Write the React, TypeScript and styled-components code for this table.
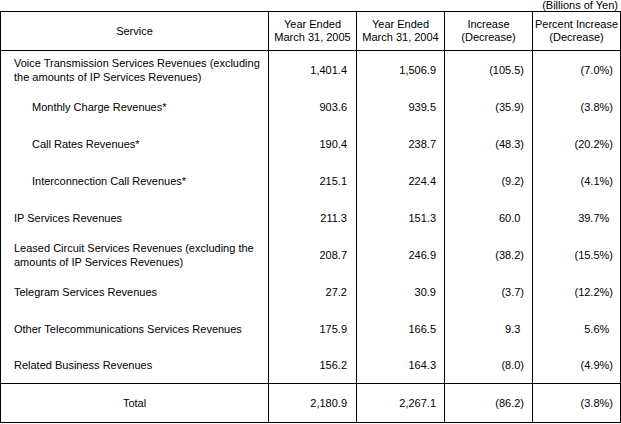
import React from "react";
import styled, { createGlobalStyle } from "styled-components";

const GlobalStyle = createGlobalStyle`
  html, body { margin: 0; padding: 0; background: #ffffff; }
  body { font-family: "Liberation Sans", Arial, sans-serif; font-size: 11px; color: #000; }
`;

const Page = styled.div`
  width: 621px;
  display: flex;
  flex-direction: column;
`;

const Unit = styled.div`
  height: 11px;
  line-height: 11px;
  text-align: right;
  padding-right: 3px;
  white-space: nowrap;
`;

const Table = styled.table`
  border-collapse: separate;
  border-spacing: 0;
  width: 621px;
  table-layout: fixed;
  border-top: 1px solid #000;
  border-left: 1px solid #000;
`;

const HeadCell = styled.th<{ $w: number }>`
  width: ${(p) => p.$w}px;
  height: 39px;
  box-sizing: border-box;
  padding: 0;
  font-weight: normal;
  text-align: center;
  vertical-align: middle;
  line-height: 13px;
  border-right: 1px solid #000;
  border-bottom: 1px solid #000;
  white-space: nowrap;
`;

const LabelCell = styled.td<{ $indent?: boolean; $h: number }>`
  height: ${(p) => p.$h}px;
  box-sizing: border-box;
  padding: 0 4px 0 ${(p) => (p.$indent ? 31 : 13)}px;
  vertical-align: middle;
  line-height: 14px;
  border-right: 1px solid #000;
`;

const NumCell = styled.td<{ $pr: number }>`
  box-sizing: border-box;
  padding: 0 ${(p) => p.$pr}px 0 0;
  text-align: right;
  vertical-align: middle;
  white-space: nowrap;
  border-right: 1px solid #000;
`;

const TotalLabel = styled.td`
  height: 40px;
  box-sizing: border-box;
  padding: 0;
  text-align: center;
  vertical-align: middle;
  border-right: 1px solid #000;
  border-top: 1px solid #000;
  border-bottom: 1px solid #000;
`;

const TotalNum = styled(NumCell)`
  border-top: 1px solid #000;
  border-bottom: 1px solid #000;
`;

const Ghost = styled.span`
  visibility: hidden;
`;

type Row = {
  label: string;
  indent?: boolean;
  v: [string, string, string, string];
};

const rows: Row[] = [
  {
    label: "Voice Transmission Services Revenues (excluding the amounts of IP Services Revenues)",
    v: ["1,401.4", "1,506.9", "(105.5)", "(7.0%)"],
  },
  { label: "Monthly Charge Revenues*", indent: true, v: ["903.6", "939.5", "(35.9)", "(3.8%)"] },
  { label: "Call Rates Revenues*", indent: true, v: ["190.4", "238.7", "(48.3)", "(20.2%)"] },
  { label: "Interconnection Call Revenues*", indent: true, v: ["215.1", "224.4", "(9.2)", "(4.1%)"] },
  { label: "IP Services Revenues", v: ["211.3", "151.3", "60.0", "39.7%"] },
  {
    label: "Leased Circuit Services Revenues (excluding the amounts of IP Services Revenues)",
    v: ["208.7", "246.9", "(38.2)", "(15.5%)"],
  },
  { label: "Telegram Services Revenues", v: ["27.2", "30.9", "(3.7)", "(12.2%)"] },
  { label: "Other Telecommunications Services Revenues", v: ["175.9", "166.5", "9.3", "5.6%"] },
  { label: "Related Business Revenues", v: ["156.2", "164.3", "(8.0)", "(4.9%)"] },
];

const pads = [9, 8, 8, 7];

const Value: React.FC<{ text: string; paren: boolean }> = ({ text, paren }) =>
  paren && !text.startsWith("(") ? (
    <>
      {text}
      <Ghost>)</Ghost>
    </>
  ) : (
    <>{text}</>
  );

export default function App() {
  return (
    <Page>
      <GlobalStyle />
      <Unit>(Billions of Yen)</Unit>
      <Table>
        <thead>
          <tr>
            <HeadCell $w={268}>Service</HeadCell>
            <HeadCell $w={88}>
              Year Ended
              <br />
              March 31, 2005
            </HeadCell>
            <HeadCell $w={88}>
              Year Ended
              <br />
              March 31, 2004
            </HeadCell>
            <HeadCell $w={88}>
              Increase
              <br />
              (Decrease)
            </HeadCell>
            <HeadCell $w={88}>
              Percent Increase
              <br />
              (Decrease)
            </HeadCell>
          </tr>
        </thead>
        <tbody>
          {rows.map((r, i) => (
            <tr key={r.label}>
              <LabelCell $indent={r.indent} $h={i === rows.length - 1 ? 36 : 37}>
                {r.label}
              </LabelCell>
              {r.v.map((val, j) => (
                <NumCell key={j} $pr={pads[j]}>
                  <Value text={val} paren={j >= 2} />
                </NumCell>
              ))}
            </tr>
          ))}
          <tr>
            <TotalLabel>Total</TotalLabel>
            {["2,180.9", "2,267.1", "(86.2)", "(3.8%)"].map((val, j) => (
              <TotalNum key={j} $pr={pads[j]}>
                <Value text={val} paren={j >= 2} />
              </TotalNum>
            ))}
          </tr>
        </tbody>
      </Table>
    </Page>
  );
}
